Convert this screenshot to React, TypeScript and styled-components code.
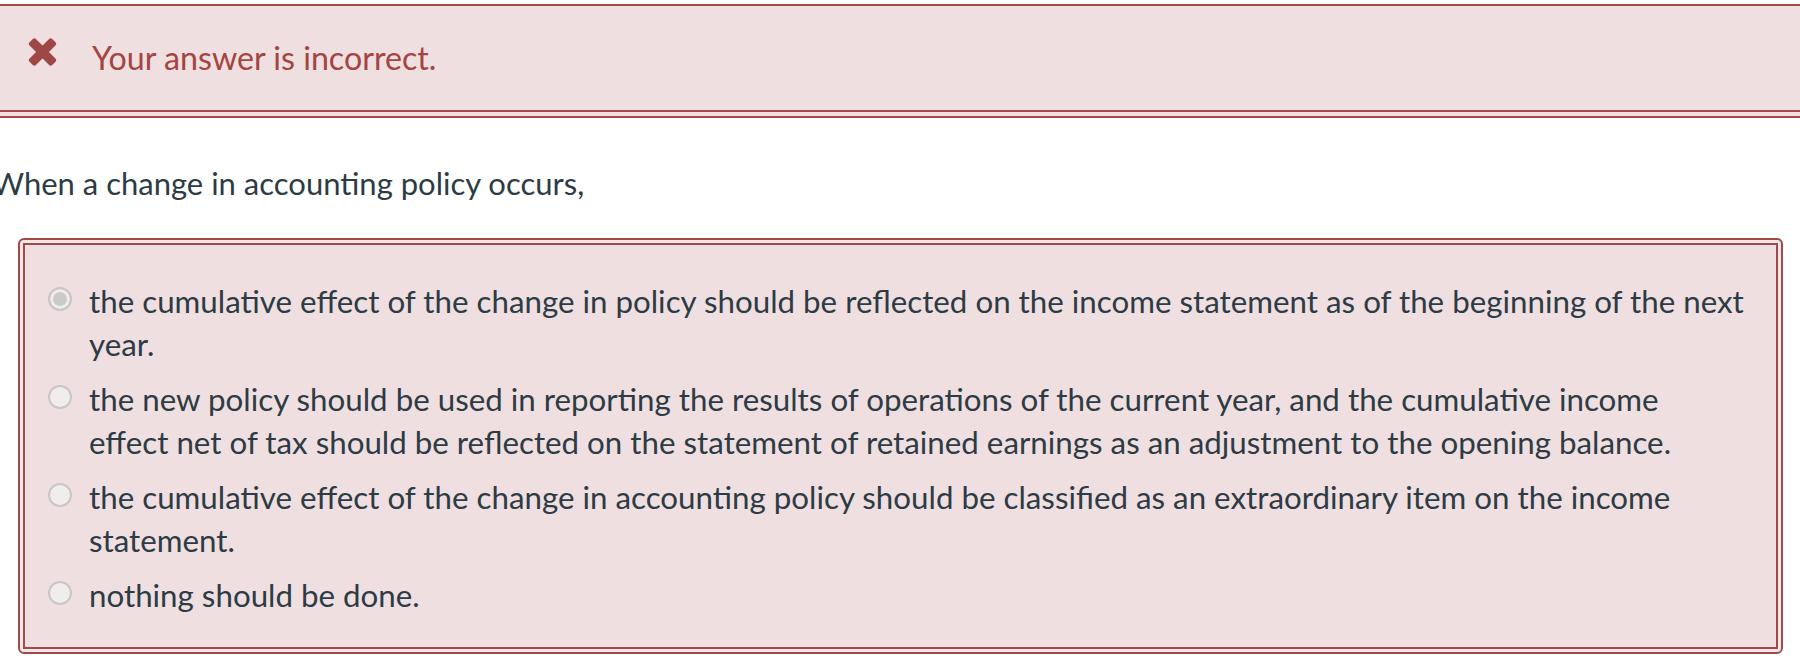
import React from "react";
import styled, { createGlobalStyle } from "styled-components";

const GlobalStyle = createGlobalStyle`
  html, body {
    margin: 0;
    padding: 0;
    background: #ffffff;
  }
  body {
    font-family: Lato, "Open Sans", "Liberation Sans", sans-serif;
    color: #2d3b45;
    overflow: hidden;
  }
`;

const Page = styled.div`
  width: 1800px;
  padding-top: 4px;
`;

const Banner = styled.div`
  display: flex;
  align-items: center;
  gap: 35px;
  height: 104px;
  padding-left: 28px;
  background: #efdfe0;
  border-top: 2px solid #a24a49;
  border-bottom: 2px solid #a24a49;
  box-shadow: 0 4px 0 #efdfe0, 0 6px 0 #a24a49;
`;

const BannerIcon = styled.svg`
  flex: none;
  width: 29px;
  height: 28px;
  margin-bottom: 12px;
`;

const BannerText = styled.span`
  font-size: 32.2px;
  line-height: 1.4;
  color: #a34542;
`;

const Question = styled.p`
  margin: 50px 0 0 -8px;
  font-size: 31px;
  line-height: 43px;
`;

const AnswerFrame = styled.div`
  margin: 33px 17px 0 18px;
  padding: 3px;
  border: 2px solid #a24a49;
  border-radius: 6px;
  background: #f4e9e9;
`;

const AnswerBox = styled.div`
  display: flex;
  flex-direction: column;
  gap: 12px;
  padding: 35px 8px 30px 23px;
  border: 2px solid #a24a49;
  background: #efdfe0;
`;

const Option = styled.label`
  display: flex;
  align-items: flex-start;
  gap: 17px;
  font-size: 31.3px;
  line-height: 43px;
`;

const Radio = styled.span<{ $checked?: boolean }>`
  flex: none;
  box-sizing: border-box;
  width: 24px;
  height: 24px;
  margin-top: 7px;
  border-radius: 50%;
  border: 2px solid #c9c6c6;
  background: ${(p) => (p.$checked ? "#cbc9c9" : "#f1eded")};
  box-shadow: ${(p) => (p.$checked ? "inset 0 0 0 3px #f1eded" : "none")};
`;

const OptionText = styled.span`
  white-space: nowrap;
`;

const options = [
  {
    lines: [
      "the cumulative effect of the change in policy should be reflected on the income statement as of the beginning of the next",
      "year.",
    ],
    checked: true,
  },
  {
    lines: [
      "the new policy should be used in reporting the results of operations of the current year, and the cumulative income",
      "effect net of tax should be reflected on the statement of retained earnings as an adjustment to the opening balance.",
    ],
  },
  {
    lines: [
      "the cumulative effect of the change in accounting policy should be classified as an extraordinary item on the income",
      "statement.",
    ],
  },
  { lines: ["nothing should be done."] },
];

const App = () => {
  return (
    <Page>
      <GlobalStyle />
      <Banner>
        <BannerIcon viewBox="0 0 29 28">
          <g fill="#9f4745" transform="translate(14.5 14)">
            <rect x="-16" y="-4.5" width="32" height="9" rx="2.2" transform="rotate(45)" />
            <rect x="-16" y="-4.5" width="32" height="9" rx="2.2" transform="rotate(-45)" />
          </g>
        </BannerIcon>
        <BannerText>Your answer is incorrect.</BannerText>
      </Banner>

      <Question>When a change in accounting policy occurs,</Question>

      <AnswerFrame>
        <AnswerBox>
          {options.map((o, i) => (
            <Option key={i}>
              <Radio $checked={o.checked} />
              <OptionText>
                {o.lines.map((line, j) => (
                  <React.Fragment key={j}>
                    {j > 0 && <br />}
                    {line}
                  </React.Fragment>
                ))}
              </OptionText>
            </Option>
          ))}
        </AnswerBox>
      </AnswerFrame>
    </Page>
  );
};

export default App;
